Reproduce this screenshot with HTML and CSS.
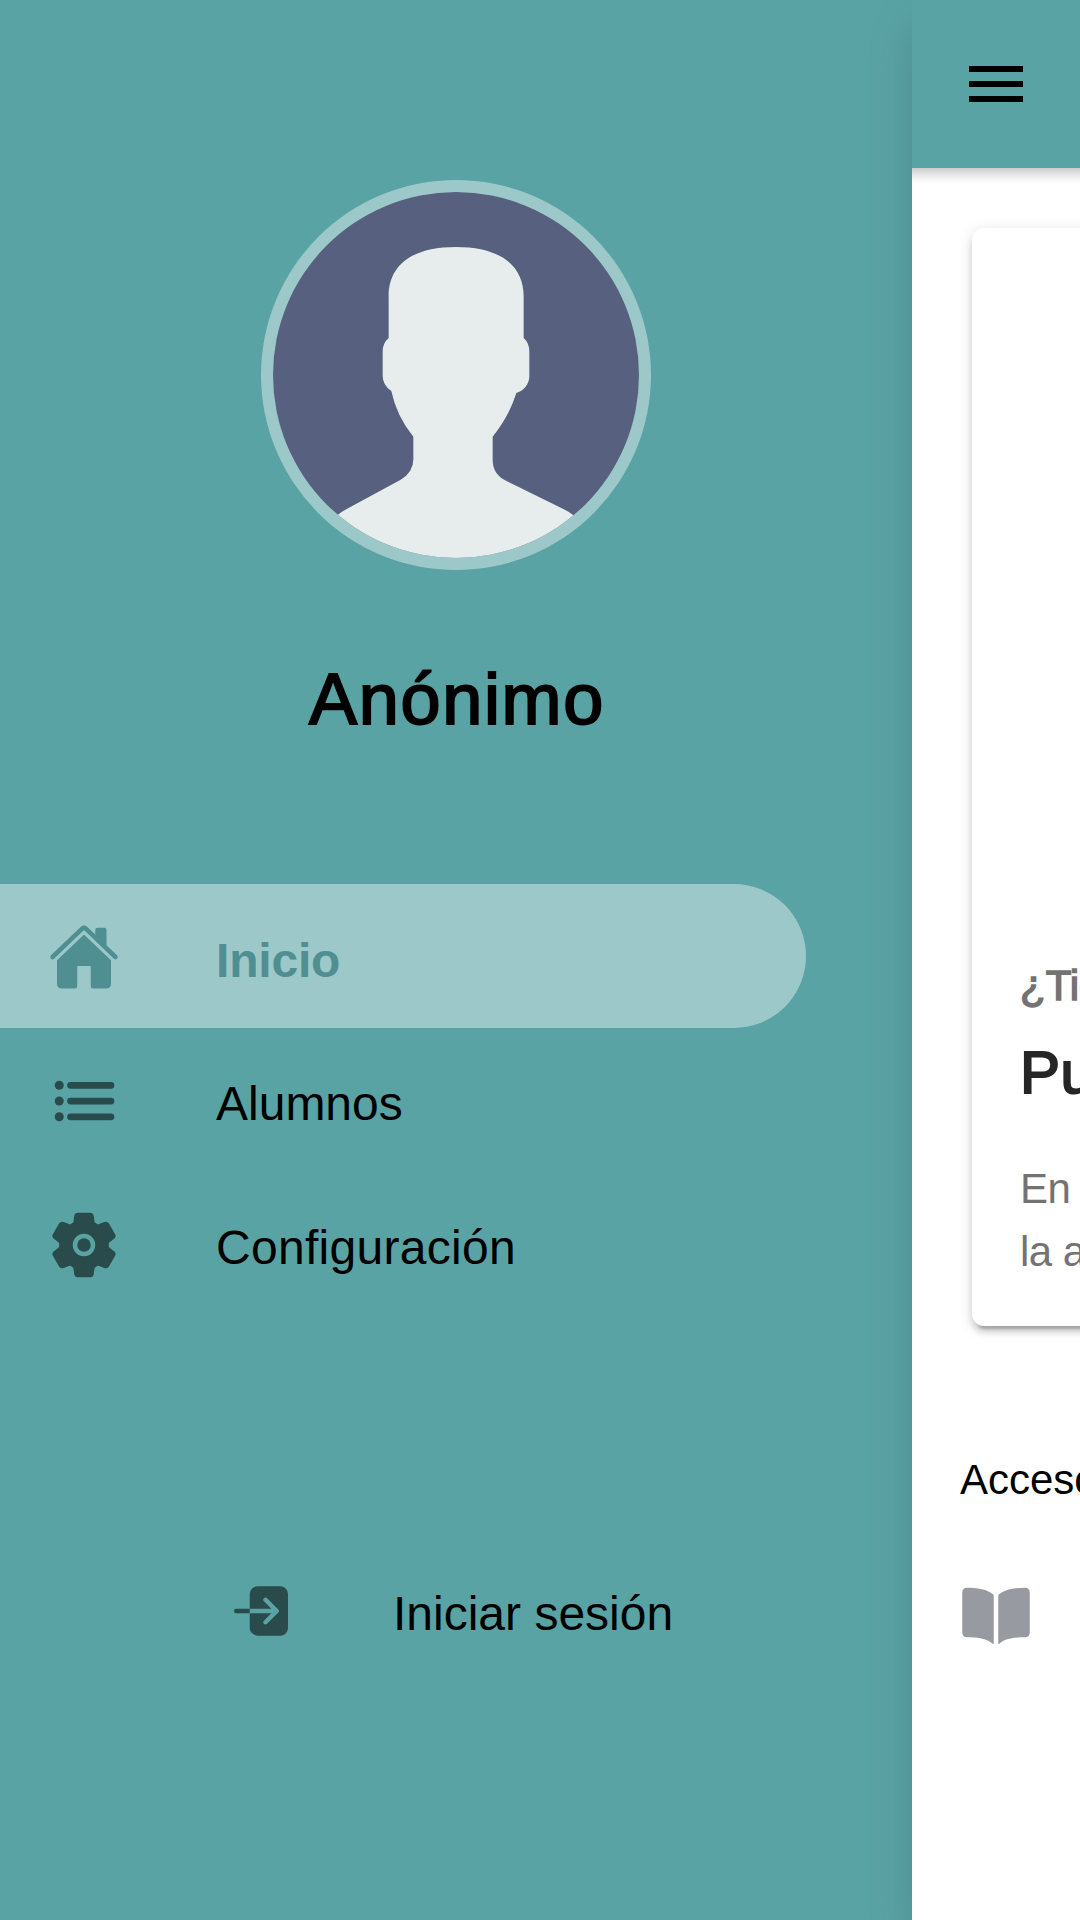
FILE: index.html
```html
<!DOCTYPE html>
<html lang="es">
<head>
<meta charset="utf-8">
<title>Inicio</title>
<link rel="stylesheet" href="styles.css">
</head>
<body>
<div class="app">
  <aside class="menu">
    <div class="avatar">
      <svg viewBox="69 66 1098 1098">
        <path fill="#e6edec" d="M416 504V385C413 290 480 231 618 231S823 290 821 385V504Q838 519 838 545V619C838 643 820 664 799 669Q777 740 728 800V870Q728 911 765 931L940 1017Q955 1024 969 1035L1167 1164H69L266 1033Q275 1025 290 1017L452 929Q490 907 490 868V800Q440 739 424 663Q398 645 398 617V545Q398 519 416 504Z"/>
      </svg>
    </div>
    <h1 class="name">Anónimo</h1>
    <nav class="nav">
      <a class="item active">
        <svg class="icon" viewBox="0 0 512 512"><path d="M261.56 101.28a8 8 0 00-11.06 0L66.4 277.15a8 8 0 00-2.47 5.79L63.9 448a32 32 0 0032 32H192a16 16 0 0016-16V328a8 8 0 018-8h80a8 8 0 018 8v136a16 16 0 0016 16h96.06a32 32 0 0032-32V282.94a8 8 0 00-2.47-5.79z"/><path d="M490.91 244.15l-74.8-71.56V64a16 16 0 00-16-16h-48a16 16 0 00-16 16v32l-57.92-55.38C272.77 35.14 264.71 32 256 32c-8.68 0-16.72 3.14-22.14 8.63l-212.7 203.5c-6.22 6-7 15.87-1.34 22.37A16 16 0 0043 267.56L250.5 69.28a8 8 0 0111.06 0l207.52 198.28a16 16 0 0022.59-.44c6.14-6.36 5.63-16.86-.76-22.97z"/></svg>
        <span class="label">Inicio</span>
      </a>
      <a class="item">
        <svg class="icon" viewBox="0 0 512 512"><path d="M160 144h288M160 256h288M160 368h288" stroke="currentColor" stroke-width="48" stroke-linecap="round"/><circle cx="80" cy="144" r="32"/><circle cx="80" cy="256" r="32"/><circle cx="80" cy="368" r="32"/></svg>
        <span class="label">Alumnos</span>
      </a>
      <a class="item">
        <svg class="icon" viewBox="0 0 512 512"><circle cx="256" cy="256" r="48"/><path fill-rule="evenodd" d="M470.39 300l-.47-.38-31.56-24.75a16.11 16.11 0 01-6.1-13.33v-11.56a16 16 0 016.11-13.22L469.92 212l.47-.38a26.68 26.68 0 005.9-34.06l-42.71-73.9a1.59 1.59 0 01-.13-.22A26.86 26.86 0 00401 92.14l-.35.13-37.1 14.93a15.94 15.94 0 01-14.47-1.29q-4.92-3.1-10-5.86a15.94 15.94 0 01-8.19-11.82l-5.59-39.59-.12-.72A27.22 27.22 0 00298.76 26h-85.52a26.92 26.92 0 00-26.45 22.39l-.09.56-5.57 39.67a16 16 0 01-8.13 11.82 175.21 175.21 0 00-10 5.82 15.92 15.92 0 01-14.43 1.27l-37.13-15-.35-.14a26.87 26.87 0 00-32.48 11.34l-.13.22-42.77 73.95a26.71 26.71 0 005.9 34.1l.47.38 31.56 24.75a16.11 16.11 0 016.1 13.33v11.56a16 16 0 01-6.11 13.22L42.08 300l-.47.38a26.68 26.68 0 00-5.9 34.06l42.71 73.9a1.59 1.59 0 01.13.22 26.86 26.86 0 0032.45 11.3l.35-.13 37.07-14.93a15.94 15.94 0 0114.47 1.29q4.92 3.11 10 5.86a15.94 15.94 0 018.19 11.82l5.56 39.59.12.72A27.22 27.22 0 00213.24 486h85.52a26.92 26.92 0 0026.45-22.39l.09-.56 5.57-39.67a16 16 0 018.18-11.82c3.42-1.84 6.76-3.79 10-5.82a15.92 15.92 0 0114.43-1.27l37.13 14.95.35.14a26.85 26.85 0 0032.48-11.34 2.53 2.53 0 01.13-.22l42.71-73.89a26.7 26.7 0 00-5.89-34.11zM256 176a80 80 0 100 160 80 80 0 100-160z"/></svg>
        <span class="label spaced">Configuración</span>
      </a>
    </nav>
    <a class="item login">
      <svg class="icon" viewBox="0 0 512 512"><path d="M392 80H232a56.06 56.06 0 00-56 56v104h153.37l-52.68-52.69a16 16 0 0122.62-22.62l80 80a16 16 0 010 22.62l-80 80a16 16 0 01-22.62-22.62L329.37 272H176v104c0 32.05 33.79 56 64 56h152a56.06 56.06 0 0056-56V136a56.06 56.06 0 00-56-56zM80 240a16 16 0 000 32h96v-32z"/></svg>
      <span class="label">Iniciar sesión</span>
    </a>
  </aside>
  <main class="page">
    <header class="toolbar">
      <svg class="burger" viewBox="0 0 54 36"><path d="M0 0h54v6H0zM0 15h54v6H0zM0 30h54v6H0z"/></svg>
    </header>
    <section class="card">
      <p class="subtitle">¿Tie</p>
      <h2 class="title">Pu</h2>
      <p class="text">En<br>la a</p>
    </section>
    <h3 class="heading">Acceso</h3>
    <svg class="book" viewBox="0 0 512 512"><path d="M202.24 74C166.11 56.75 115.61 48.3 48 48a31.36 31.36 0 00-17.92 5.33A32 32 0 0016 79.9V366c0 19.34 13.76 33.93 32 33.93 71.07 0 142.36 6.64 185.06 47a4.11 4.11 0 006.94-3V106.82a15.89 15.89 0 00-5.46-12A143 143 0 00202.24 74zM481.92 53.3A31.33 31.33 0 00464 48c-67.61.3-118.11 8.71-154.24 26a143.31 143.31 0 00-32.31 20.78 15.93 15.93 0 00-5.45 12v337.13a3.93 3.93 0 006.68 2.81c25.67-25.5 70.72-46.82 185.36-46.81a32 32 0 0032-32v-288a32 32 0 00-14.12-26.61z"/></svg>
  </main>
</div>
</body>
</html>
```
FILE: styles.css
```css
* { box-sizing: border-box; }
body, h1, h2, h3, p { margin: 0; font-weight: 400; }
body {
  background: #5aa3a5;
  color: #000;
  font-family: "Liberation Sans", Arial, sans-serif;
}
.app {
  display: flex;
  width: 1080px;
  height: 1920px;
  overflow: hidden;
}
.menu {
  flex: 0 0 912px;
  display: flex;
  flex-direction: column;
  padding-top: 180px;
  background: #5aa3a5;
}
.avatar {
  align-self: center;
  width: 390px;
  height: 390px;
  padding: 12px;
  border-radius: 50%;
  background: #9cc8c9;
}
.avatar svg {
  display: block;
  width: 366px;
  height: 366px;
  border-radius: 50%;
  background: #57617f;
}
.name {
  margin-top: 87px;
  font-size: 72px;
  line-height: 84px;
  text-align: center;
  letter-spacing: 1.7px;
  text-indent: 2px;
  -webkit-text-stroke: 2px #000;
}
.nav { margin-top: 143px; }
.item {
  display: flex;
  align-items: center;
  gap: 96px;
  width: 806px;
  height: 144px;
  padding-left: 48px;
  font-size: 48px;
  white-space: nowrap;
}
.icon {
  flex: none;
  width: 72px;
  height: 72px;
  color: #294b4c;
  fill: currentColor;
}
.nav .icon { margin-top: 2px; }
.label { padding-top: 7px; }
.spaced { letter-spacing: 0.3px; }
.active {
  border-radius: 0 72px 72px 0;
  background: #9cc8c9;
  color: #508f91;
  font-weight: 700;
}
.active .icon { color: inherit; }
.active .label { padding-top: 9px; letter-spacing: -0.2px; }
.login { margin-top: 223px; padding-left: 225px; }
.login .label { padding-top: 5px; }
.page {
  position: relative;
  flex: 0 0 168px;
  background: #fff;
  box-shadow: 6px 24px 48px rgba(0, 0, 0, 0.18);
  white-space: nowrap;
}
.toolbar {
  position: relative;
  height: 168px;
  padding: 66px 57px;
  background: #5aa3a5;
}
.toolbar::after {
  content: "";
  position: absolute;
  top: 100%;
  left: 0;
  width: 100%;
  height: 16px;
  background: linear-gradient(rgba(0, 0, 0, 0.2), rgba(0, 0, 0, 0.1) 40%, rgba(0, 0, 0, 0.03) 75%, transparent);
}
.burger { display: block; width: 54px; height: 36px; }
.card {
  width: 1020px;
  height: 1098px;
  margin: 60px 0 0 60px;
  padding: 733px 48px 0;
  border-radius: 12px;
  background: #fff;
  box-shadow: 0 9px 3px -6px rgba(0, 0, 0, 0.2), 0 6px 6px 0 rgba(0, 0, 0, 0.14), 0 3px 15px 0 rgba(0, 0, 0, 0.12);
}
.subtitle {
  font-size: 42px;
  line-height: 50px;
  color: #737373;
  -webkit-text-stroke: 1.5px #737373;
}
.title {
  margin-top: 26px;
  font-size: 60px;
  line-height: 72px;
  color: #262626;
  letter-spacing: 0.5px;
  -webkit-text-stroke: 2px #262626;
}
.text {
  margin-top: 48px;
  font-size: 42px;
  line-height: 63px;
  color: #737373;
  letter-spacing: -0.5px;
}
.heading {
  margin: 129px 0 0 48px;
  font-size: 42px;
  line-height: 50px;
}
.book {
  display: block;
  width: 72px;
  height: 72px;
  margin: 76px 0 0 48px;
  fill: #989aa2;
}
```
